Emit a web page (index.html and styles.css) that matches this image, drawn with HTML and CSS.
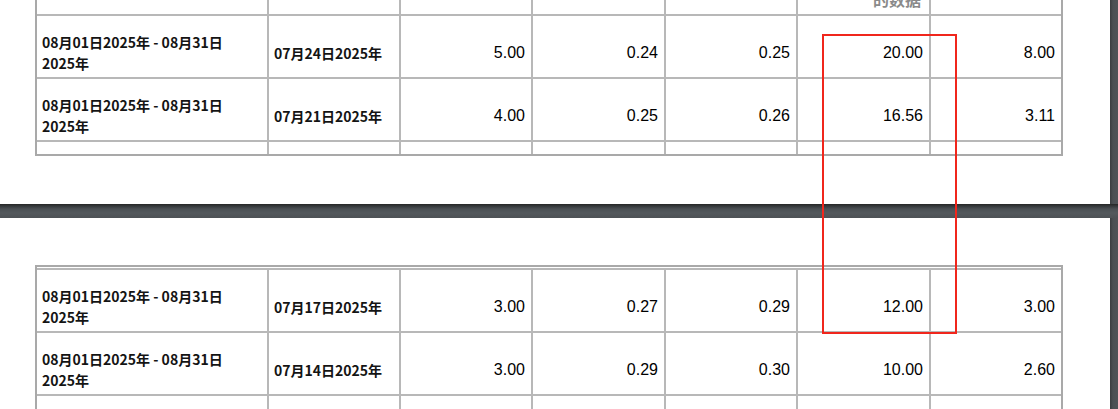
FILE: index.html
```html
<!DOCTYPE html>
<html lang="zh-CN">
<head>
<meta charset="utf-8">
<title>PDF 预览</title>
<link rel="stylesheet" href="styles.css">
</head>
<body>
<div class="viewer">
  <section class="page page-first">
    <div class="sheet sheet-cut-top">
      <div class="grid grid-first">
        <div class="cell head"></div>
        <div class="cell head"></div>
        <div class="cell head"></div>
        <div class="cell head"></div>
        <div class="cell head"></div>
        <div class="cell head head-text">的数据</div>
        <div class="cell head"></div>

        <div class="cell txt"><span>08月01日2025年 - 08月31日<br>2025年</span></div>
        <div class="cell txt"><span>07月24日2025年</span></div>
        <div class="cell num">5.00</div>
        <div class="cell num">0.24</div>
        <div class="cell num">0.25</div>
        <div class="cell num">20.00</div>
        <div class="cell num">8.00</div>

        <div class="cell txt"><span>08月01日2025年 - 08月31日<br>2025年</span></div>
        <div class="cell txt"><span>07月21日2025年</span></div>
        <div class="cell num">4.00</div>
        <div class="cell num">0.25</div>
        <div class="cell num">0.26</div>
        <div class="cell num">16.56</div>
        <div class="cell num">3.11</div>

        <div class="cell"></div>
        <div class="cell"></div>
        <div class="cell"></div>
        <div class="cell"></div>
        <div class="cell"></div>
        <div class="cell"></div>
        <div class="cell"></div>
      </div>
    </div>
  </section>

  <div class="page-gap"></div>

  <section class="page page-second">
    <div class="sheet sheet-cont">
      <div class="grid grid-second">
        <div class="cell txt"><span>08月01日2025年 - 08月31日<br>2025年</span></div>
        <div class="cell txt"><span>07月17日2025年</span></div>
        <div class="cell num">3.00</div>
        <div class="cell num">0.27</div>
        <div class="cell num">0.29</div>
        <div class="cell num">12.00</div>
        <div class="cell num">3.00</div>

        <div class="cell txt"><span>08月01日2025年 - 08月31日<br>2025年</span></div>
        <div class="cell txt"><span>07月14日2025年</span></div>
        <div class="cell num">3.00</div>
        <div class="cell num">0.29</div>
        <div class="cell num">0.30</div>
        <div class="cell num">10.00</div>
        <div class="cell num">2.60</div>

        <div class="cell"></div>
        <div class="cell"></div>
        <div class="cell"></div>
        <div class="cell"></div>
        <div class="cell"></div>
        <div class="cell"></div>
        <div class="cell"></div>
      </div>
    </div>
  </section>
</div>

<div class="annotation-box"></div>
</body>
</html>
```

FILE: styles.css
```css
html, body {
  margin: 0;
  padding: 0;
}

body {
  width: 1118px;
  height: 409px;
  overflow: hidden;
  position: relative;
  background: linear-gradient(90deg, #3a3d40 0, #3a3d40 1110px, #4b4f53 1113px, #4f5357 1118px);
  font-family: "Liberation Sans", "Noto Sans CJK SC", sans-serif;
}

.viewer {
  display: flex;
  flex-direction: column;
  width: 1118px;
}

.page {
  width: 1110px;
  background: #ffffff;
  overflow: hidden;
}

.page-first {
  height: 204px;
}

.page-second {
  height: 191px;
}

.page-gap {
  height: 14px;
  width: 1118px;
  background: linear-gradient(180deg, #262727 0, #34373a 2px, #4b5054 5px, #53585c 9px, #4d5155 14px);
}

.sheet {
  width: 1028px;
  box-sizing: border-box;
  margin-left: 35px;
  border: 2px solid #a9a9a9;
  background: #ffffff;
}

.sheet-cut-top {
  margin-top: -28px;
}

.sheet-cont {
  margin-top: 47px;
  padding-top: 1px;
}

.grid {
  display: grid;
  grid-template-columns: 230px 130px 130px 131px 130px 131px 130px;
  gap: 2px;
  background: #b8b8b8;
}

.grid-first {
  grid-template-rows: 40px 61px 61px 12px;
}

.grid-second {
  padding-top: 2px;
  grid-template-rows: 61px 61px 40px;
}

.cell {
  background: #ffffff;
  display: flex;
  align-items: center;
  box-sizing: border-box;
  min-width: 0;
}

.txt {
  padding: 14px 4px 1px 5px;
  font-family: "Noto Sans CJK SC", "Liberation Sans", sans-serif;
  font-weight: 700;
  font-size: 14px;
  line-height: 21px;
  color: #141414;
}

.num {
  justify-content: flex-end;
  padding: 14px 6px 1px 4px;
  font-family: "Liberation Sans", Arial, sans-serif;
  font-size: 16px;
  line-height: 18px;
  color: #000000;
}

.head-text {
  align-items: flex-end;
  justify-content: flex-end;
  padding: 0 8px 5px 4px;
  font-family: "Noto Sans CJK SC", "Liberation Sans", sans-serif;
  font-weight: 700;
  font-size: 16px;
  line-height: 20px;
  color: #8a8a8a;
}

.annotation-box {
  position: absolute;
  left: 822px;
  top: 34px;
  width: 135px;
  height: 300px;
  box-sizing: border-box;
  border: 2px solid #f0261c;
  pointer-events: none;
}
```
